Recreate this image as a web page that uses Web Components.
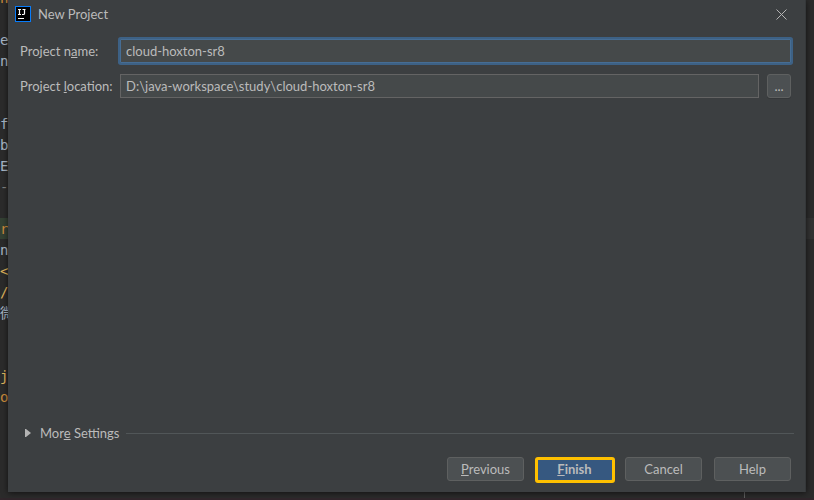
<!DOCTYPE html>
<html lang="en">
<head>
<meta charset="utf-8">
<title>New Project</title>
<style>
html,body{margin:0;height:100%;background:#2b2b2b;overflow:hidden}
body{font:13px/20px Lato,"Noto Sans",sans-serif;color:#bbb}
</style>
</head>
<body>
<ide-window>
  <code-editor slot="editor">
    <code-line tone="key">n</code-line>
    <code-line></code-line>
    <code-line>e</code-line>
    <code-line>n</code-line>
    <code-line></code-line>
    <code-line></code-line>
    <code-line>f</code-line>
    <code-line>b</code-line>
    <code-line>E</code-line>
    <code-line tone="dim">-</code-line>
    <code-line></code-line>
    <code-line tone="key" current>r</code-line>
    <code-line>n</code-line>
    <code-line tone="tag">&lt;</code-line>
    <code-line tone="tag">/</code-line>
    <code-line>微</code-line>
    <code-line></code-line>
    <code-line></code-line>
    <code-line tone="tag">j</code-line>
    <code-line tone="key">o</code-line>
  </code-editor>
  <project-dialog slot="dialog">
    <span slot="title">New Project</span>
    <path-field focused value="cloud-hoxton-sr8">Project n<u>a</u>me:</path-field>
    <path-field browse value="D:\java-workspace\study\cloud-hoxton-sr8">Project <u>l</u>ocation:</path-field>
    <more-settings slot="more">Mor<u>e</u> Settings</more-settings>
    <dialog-button slot="actions"><u>P</u>revious</dialog-button>
    <dialog-button slot="actions" primary><u>F</u>inish</dialog-button>
    <dialog-button slot="actions">Cancel</dialog-button>
    <dialog-button slot="actions">Help</dialog-button>
  </project-dialog>
</ide-window>
<script>
function define(name, html, setup) {
  const template = document.createElement('template');
  template.innerHTML = html;
  customElements.define(name, class extends HTMLElement {
    constructor() {
      super();
      this.attachShadow({mode: 'open'}).append(template.content.cloneNode(true));
    }
    connectedCallback() { if (setup) setup(this, this.shadowRoot); }
  });
}

define('ide-window', `<style>
:host{display:grid;grid-template:minmax(0,1fr)/minmax(0,1fr);height:100vh;overflow:hidden}
.back,.front{grid-area:1/1;min-height:0;display:grid}
.back{grid-template-rows:minmax(0,1fr) 2px;overflow:hidden}
.edge{background:#30262b}
.front{padding:0 8px 8px}
</style>
<div class="back"><slot name="editor"></slot><div class="edge"></div></div>
<div class="front"><slot name="dialog"></slot></div>`);

define('code-editor', `<style>
:host{display:block;overflow:hidden;background:linear-gradient(#606060,#606060) right 69px top/1px 100% no-repeat #2b2b2b}
.lines{margin-top:-13px}
</style><div class="lines"><slot></slot></div>`);

define('code-line', `<style>
:host{display:block;height:21px;font:14px/22px "DejaVu Sans Mono","Noto Sans CJK SC",monospace;color:#a9b7c6;white-space:pre}
:host([tone=key]){color:#cc8b3c}
:host([tone=tag]){color:#e0b65c}
:host([tone=dim]){color:#808080}
:host([current]){background:linear-gradient(90deg,#344134 8px,#323232 8px)}
</style><slot></slot>`);

define('project-dialog', `<style>
:host{display:flex;flex-direction:column;background:#3c3f41;border-right:1px solid #35383a;box-shadow:0 1px 6px #0009;box-sizing:border-box;min-height:0}
header{display:flex;align-items:center;height:28px;padding:0 18px 0 7px;gap:7px}
.title{flex:1}
.close{all:unset;display:flex}
svg{display:block}
main{flex:1;display:flex;flex-direction:column;gap:11px;padding:11px 14px 0 12px}
.more{padding:0 11px 0 17px}
footer{display:flex;justify-content:flex-end;gap:12px;padding:14px 14px 11px}
</style>
<header>
<svg width="16" height="16" viewBox="0 0 16 16" aria-hidden="true"><path fill="#087cfa" d="M0 0h16v16H0z"/><path fill="#000" d="M1 1h14v14H1z"/><path d="M3 3.500h3M4.500 3.500v5M3 8.500h3M7.500 3.500h3M9.500 3.500v4q0 1-1 1H7" fill="none" stroke="#fff" stroke-width="1.200"/><path fill="#fff" d="M3 12h6v1H3z"/></svg>
<span class="title"><slot name="title"></slot></span>
<button class="close" aria-label="Close"><svg width="11" height="11" viewBox="0 0 11 11"><path d="M.5.5l10 10M10.500.5l-10 10" stroke="#b4b4b4" fill="none"/></svg></button>
</header>
<main><slot></slot></main>
<div class="more"><slot name="more"></slot></div>
<footer><slot name="actions"></slot></footer>`);

define('path-field', `<style>
:host{display:flex;align-items:center;height:24px}
label{flex:0 0 100px;white-space:nowrap}
input{flex:1;min-width:0;height:24px;box-sizing:border-box;margin:0;padding:0 5px;border:1px solid #646464;border-radius:0;background:#45494a;color:#bbb;font:inherit;outline:0}
:host([focused]) input{border-color:#466d94;box-shadow:0 0 0 2px #3d6185;border-radius:1px}
button{display:none;width:24px;height:24px;box-sizing:border-box;margin-left:8px;padding:0;border:1px solid #5e6060;border-radius:3px;background:#4c5052;color:#bbb;font:inherit;line-height:22px;box-shadow:0 1px #35383a}
:host([browse]) button{display:block}
</style>
<label for="field"><slot></slot></label><input id="field" type="text" spellcheck="false"><button aria-label="Browse">...</button>`,
(host, root) => { root.querySelector('input').value = host.getAttribute('value') || ''; });

define('more-settings', `<style>
:host{display:flex;align-items:center;gap:6px}
button{all:unset;display:flex;align-items:center;gap:9px}
i{flex:1;height:1px;background:#515658}
</style>
<button aria-expanded="false"><svg width="6" height="8" viewBox="0 0 6 8" aria-hidden="true"><path d="M0 0h1l5 4-5 4H0z" fill="#b4b4b4"/></svg><span><slot></slot></span></button><i></i>`);

define('dialog-button', `<style>
:host{display:block;position:relative}
button{display:block;width:77px;height:24px;box-sizing:border-box;padding:0;border:1px solid #5e6060;border-radius:3px;background:#4c5052;color:#bbb;font:inherit;line-height:22px}
:host([primary]) button{background:#365880;border-color:#4c708c;font-weight:700}
:host([primary])::after{content:"";position:absolute;inset:0 -2px -2px -1px;border:3px solid #ffc000;border-radius:3px;pointer-events:none}
</style><button><slot></slot></button>`);
</script>
</body>
</html>
